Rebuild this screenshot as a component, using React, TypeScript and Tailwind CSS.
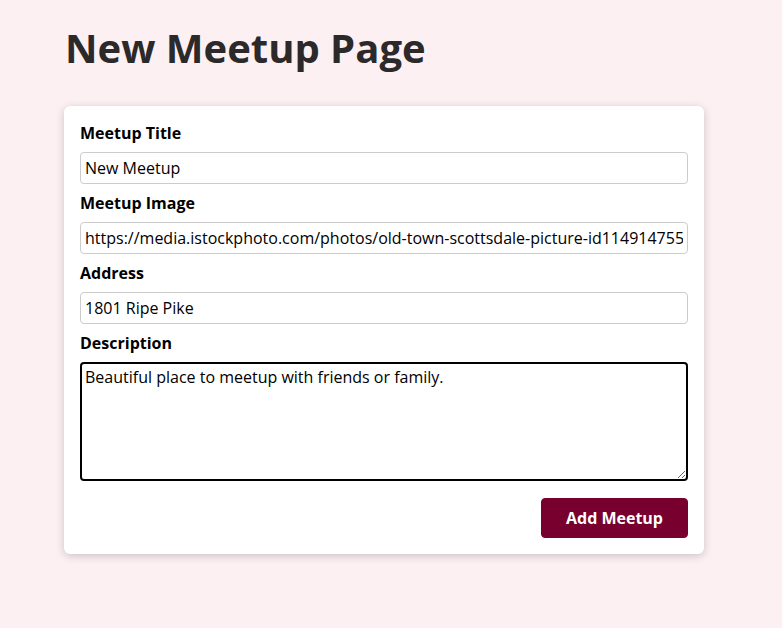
export default function App() {
  return (
    <div className="min-h-screen bg-[#fcf0f3] font-['Open_Sans',sans-serif]">
      <main className="pl-[64px] pt-[21px] pb-10">
        <h1 className="text-[40px] leading-[1.362] font-bold text-[#2c292b] mb-[31px] pl-[1px]">
          New Meetup Page
        </h1>
        <form
          className="w-[640px] bg-white rounded-[6px] p-4 shadow-[0_2px_8px_rgba(0,0,0,0.2)]"
          onSubmit={e => e.preventDefault()}
        >
          <div className="mb-2">
            <label htmlFor="title" className="block font-bold leading-[1.362] pt-[1px] -mb-[1px] text-black">
              Meetup Title
            </label>
            <input
              id="title"
              type="text"
              defaultValue="New Meetup"
              className="block w-full h-[32px] mt-2 px-1 border border-[#ccc] rounded-[4px] leading-[1.362] text-black outline-none"
            />
          </div>
          <div className="mb-2">
            <label htmlFor="image" className="block font-bold leading-[1.362] pt-[1px] -mb-[1px] text-black">
              Meetup Image
            </label>
            <input
              id="image"
              type="url"
              defaultValue="https://media.istockphoto.com/photos/old-town-scottsdale-picture-id1149147550"
              className="block w-full h-[32px] mt-2 px-1 border border-[#ccc] rounded-[4px] leading-[1.362] text-black outline-none"
            />
          </div>
          <div className="mb-2">
            <label htmlFor="address" className="block font-bold leading-[1.362] pt-[1px] -mb-[1px] text-black">
              Address
            </label>
            <input
              id="address"
              type="text"
              defaultValue="1801 Ripe Pike"
              className="block w-full h-[32px] mt-2 px-1 border border-[#ccc] rounded-[4px] leading-[1.362] text-black outline-none"
            />
          </div>
          <div className="mb-2">
            <label htmlFor="description" className="block font-bold leading-[1.362] pt-[1px] -mb-[1px] text-black">
              Description
            </label>
            <textarea
              id="description"
              rows={5}
              defaultValue="Beautiful place to meetup with friends or family."
              className="block w-full h-[119px] mt-2 px-[3px] py-[3px] border-2 border-black rounded-[4px] leading-[1.362] text-black outline-none"
            />
          </div>
          <div className="flex justify-end mt-[17px]">
            <button
              type="submit"
              className="h-[40px] px-6 pt-[2px] bg-[#77002e] border border-[#77002e] rounded-[4px] text-white font-bold leading-[1.362] cursor-pointer"
            >
              Add Meetup
            </button>
          </div>
        </form>
      </main>
    </div>
  )
}
